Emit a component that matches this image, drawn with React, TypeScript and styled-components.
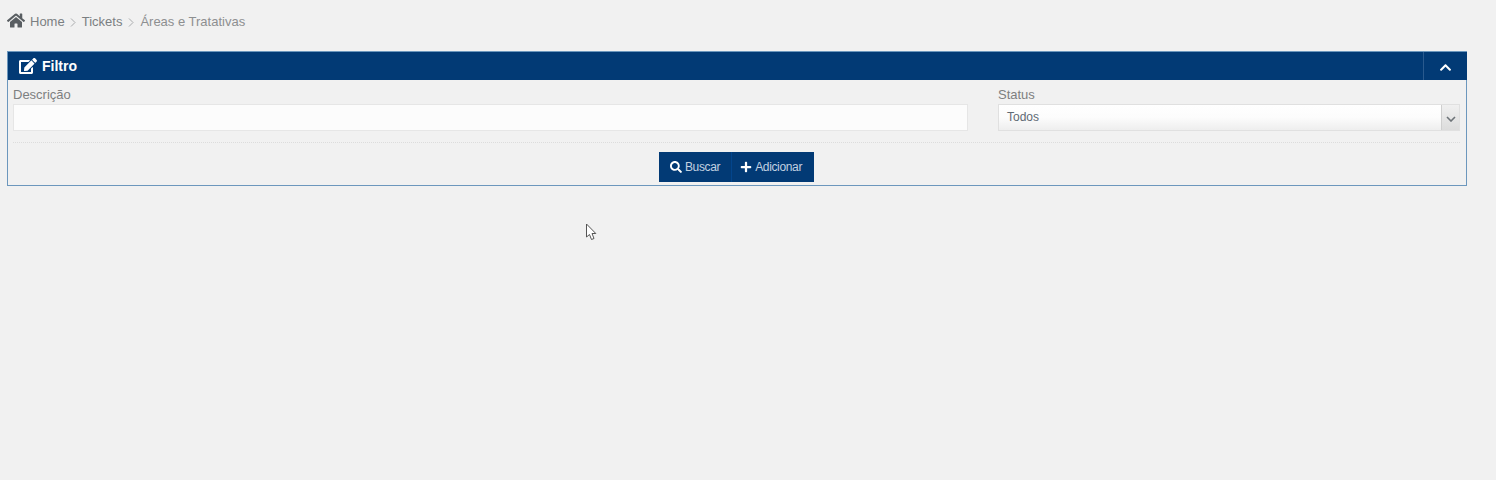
import styled, { createGlobalStyle } from 'styled-components';
import { FaChevronUp, FaEdit, FaHome, FaPlus, FaSearch } from 'react-icons/fa';

const GlobalStyle = createGlobalStyle`
  html, body {
    margin: 0;
    padding: 0;
    background: #f1f1f1;
    font-family: "Liberation Sans", Arial, sans-serif;
  }
`;

const Page = styled.div`
  position: relative;
  box-sizing: border-box;
  width: 1496px;
  height: 480px;
  padding: 11px 29px 0 7px;
  overflow: hidden;
`;

const Breadcrumb = styled.nav`
  display: flex;
  align-items: center;
  height: 20px;
  margin-bottom: 20px;
  font-size: 13px;
  color: #7b7f82;
`;

const HomeIcon = styled(FaHome)`
  width: 18px;
  height: 17px;
  margin: -2px 5px 0 0;
  color: #595e62;
`;

const Crumb = styled.span<{ $current?: boolean }>`
  color: ${({ $current }) => ($current ? '#8d8f90' : '#7b7f82')};

  &:first-of-type {
    margin-right: -1px;
  }
`;

const Separator = styled.svg`
  width: 6px;
  height: 9px;
  margin: 2px 6px 0 6px;
  fill: none;
  stroke: #a9abad;
  stroke-width: 1;
`;

const Panel = styled.section`
  box-sizing: border-box;
  height: 135px;
  border: 1px solid #6c97bd;
`;

const PanelHeader = styled.header`
  display: flex;
  justify-content: space-between;
  align-items: stretch;
  height: 28px;
  margin: 0 -1px 0 0;
  background: #023a75;
  color: #fff;
`;

const PanelTitle = styled.h2`
  display: flex;
  align-items: center;
  gap: 5px;
  margin: 0;
  padding-left: 11px;
  font-size: 14px;
  font-weight: 700;
`;

const TitleIcon = styled(FaEdit)`
  width: 18px;
  height: 16px;
`;

const CollapseButton = styled.button`
  display: flex;
  align-items: center;
  justify-content: center;
  width: 44px;
  padding: 3px 1px 0 0;
  border: 0;
  border-left: 1px solid #2a5a8e;
  background: transparent;
  color: #fff;
`;

const CollapseIcon = styled(FaChevronUp)`
  width: 13px;
  height: 13px;
`;

const FilterForm = styled.form`
  padding: 0 6px 0 5px;
`;

const FieldRow = styled.div`
  display: grid;
  grid-template-columns: 955px 462px;
  justify-content: space-between;
  padding-bottom: 11px;
  border-bottom: 1px dotted #dcdcdc;
`;

const Field = styled.label`
  display: flex;
  flex-direction: column;
`;

const FieldLabel = styled.span`
  height: 24px;
  padding-top: 7px;
  box-sizing: border-box;
  font-size: 13px;
  line-height: 15px;
  color: #7d7f80;
`;

const TextInput = styled.input`
  box-sizing: border-box;
  width: 100%;
  height: 27px;
  border: 1px solid #e6e6e6;
  background: #fcfcfc;
  outline: none;
`;

const SelectBox = styled.div`
  display: flex;
  height: 27px;
  box-sizing: border-box;
  border: 1px solid #e0e0e0;
  background: linear-gradient(#ffffff 0%, #fcfcfc 50%, #eeeeee 100%);
`;

const SelectValue = styled.span`
  flex: 1;
  padding-left: 8px;
  font-size: 12px;
  line-height: 24px;
  color: #5f6a74;
`;

const SelectArrow = styled.span`
  display: flex;
  align-items: center;
  justify-content: center;
  width: 17px;
  border-left: 1px solid #cfcfcf;
  background: linear-gradient(#f0f0f0, #dcdcdc);
`;

const ArrowIcon = styled.svg`
  width: 10px;
  height: 6px;
  margin-top: 2px;
  fill: none;
  stroke: #6d7378;
  stroke-width: 1.6;
`;

const Actions = styled.div`
  display: flex;
  justify-content: center;
  padding-top: 9px;
`;

const ActionButton = styled.button`
  display: flex;
  align-items: center;
  gap: 3px;
  height: 30px;
  border: 0;
  padding: 0 11px;
  background: #023a75;
  color: #c2d1e1;
  font-family: inherit;
  font-size: 12px;
  letter-spacing: -0.35px;

  & + & {
    border-left: 1px solid #03458c;
    padding: 0 12px 0 8px;
  }

  svg {
    width: 12px;
    height: 12px;
    color: #fff;
  }
`;

const Cursor = styled.svg`
  position: absolute;
  left: 585px;
  top: 223px;
  width: 12px;
  height: 18px;
`;

export default function App() {
  return (
    <>
      <GlobalStyle />
      <Page>
        <Breadcrumb>
          <HomeIcon />
          <Crumb>Home</Crumb>
          <Separator viewBox="0 0 6 9">
            <path d="M1 0.5 5 4.5 1 8.5" />
          </Separator>
          <Crumb>Tickets</Crumb>
          <Separator viewBox="0 0 6 9">
            <path d="M1 0.5 5 4.5 1 8.5" />
          </Separator>
          <Crumb $current>Áreas e Tratativas</Crumb>
        </Breadcrumb>

        <Panel>
          <PanelHeader>
            <PanelTitle>
              <TitleIcon />
              Filtro
            </PanelTitle>
            <CollapseButton type="button" aria-label="Recolher">
              <CollapseIcon />
            </CollapseButton>
          </PanelHeader>

          <FilterForm>
            <FieldRow>
              <Field>
                <FieldLabel>Descrição</FieldLabel>
                <TextInput type="text" />
              </Field>
              <Field>
                <FieldLabel>Status</FieldLabel>
                <SelectBox>
                  <SelectValue>Todos</SelectValue>
                  <SelectArrow>
                    <ArrowIcon viewBox="0 0 10 6">
                      <path d="M1 1 5 5 9 1" />
                    </ArrowIcon>
                  </SelectArrow>
                </SelectBox>
              </Field>
            </FieldRow>
            <Actions>
              <ActionButton type="button">
                <FaSearch />
                Buscar
              </ActionButton>
              <ActionButton type="button">
                <FaPlus />
                Adicionar
              </ActionButton>
            </Actions>
          </FilterForm>
        </Panel>

        <Cursor viewBox="0 0 12 18">
          <path
            d="M1.5 1 V14 L4.5 11.5 L6.5 16.5 L9 15.5 L7 10.5 H10.8 Z"
            fill="#fff"
            stroke="#555"
            strokeWidth="1"
          />
        </Cursor>
      </Page>
    </>
  );
}
